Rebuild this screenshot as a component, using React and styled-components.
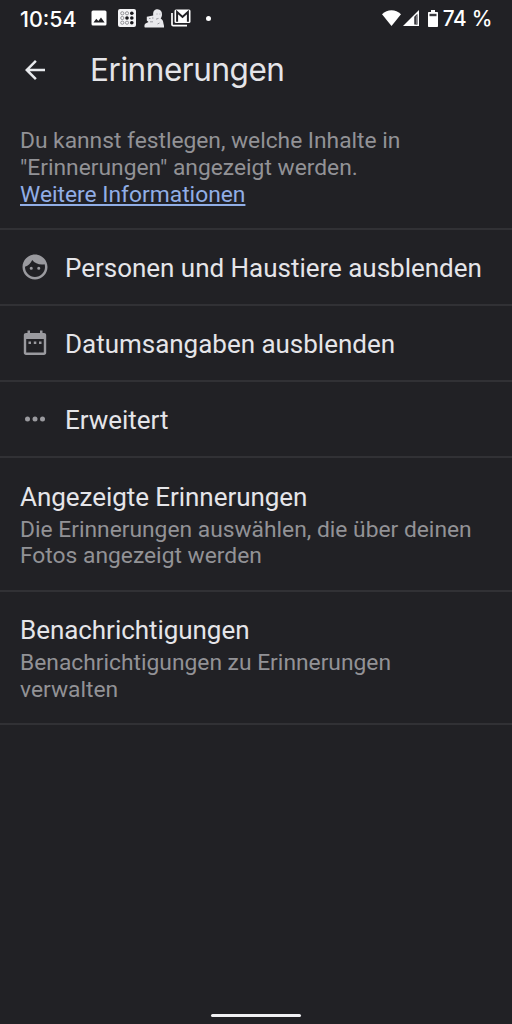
import React from "react";
import styled, { createGlobalStyle } from "styled-components";

export default function App() {
  return (
    <Screen>
      <GlobalStyle />
      <StatusBar>
        <Clock>10:54</Clock>
        <Notifications>
          <PictureIcon />
          <DiceIcon />
          <PersonIcon />
          <GmailIcon />
          <Dot />
        </Notifications>
        <System>
          <WifiIcon />
          <SignalIcon />
          <BatteryIcon />
          <Percent>74 %</Percent>
        </System>
      </StatusBar>
      <AppBar>
        <BackButton aria-label="Zurück">
          <svg width="30" height="30" viewBox="0 0 24 24" fill="#e8eaed">
            <path d="M20 11H7.83l5.59-5.59L12 4l-8 8 8 8 1.41-1.41L7.83 13H20v-2z" />
          </svg>
        </BackButton>
        <Title>Erinnerungen</Title>
      </AppBar>
      <Intro>
        <Line $spacing="-0.02px">Du kannst festlegen, welche Inhalte in</Line>
        <Line>"Erinnerungen" angezeigt werden.</Line>
        <MoreLink href="#">Weitere Informationen</MoreLink>
      </Intro>
      <Row>
        <FaceIcon />
        <RowLabel>Personen und Haustiere ausblenden</RowLabel>
      </Row>
      <Row>
        <CalendarIcon />
        <RowLabel>Datumsangaben ausblenden</RowLabel>
      </Row>
      <Row>
        <MoreIcon />
        <RowLabel>Erweitert</RowLabel>
      </Row>
      <Setting>
        <SettingTitle>Angezeigte Erinnerungen</SettingTitle>
        <Line>Die Erinnerungen auswählen, die über deinen</Line>
        <Line>Fotos angezeigt werden</Line>
      </Setting>
      <Setting>
        <SettingTitle>Benachrichtigungen</SettingTitle>
        <Line>Benachrichtigungen zu Erinnerungen</Line>
        <Line>verwalten</Line>
      </Setting>
      <HomeArea>
        <HomeHandle />
      </HomeArea>
    </Screen>
  );
}

const PictureIcon = () => (
  <svg width="16" height="16" viewBox="0 0 16 16">
    <rect x="0.5" y="0.5" width="15" height="15" rx="1.5" fill="#fff" />
    <path d="M2.5 12.5 5.3 8.8l2 2.3L10 7.6l3.6 4.9z" fill="#202024" />
  </svg>
);

const DiceIcon = () => (
  <svg width="18" height="18" viewBox="0 0 18 18">
    <rect width="18" height="18" rx="2" fill="#f4f4f6" />
    <g fill="none" stroke="#7c7c81" strokeWidth="0.8">
      <circle cx="4.3" cy="4.3" r="1.6" />
      <circle cx="9" cy="4.3" r="1.6" />
      <circle cx="4.3" cy="9" r="1.6" />
      <circle cx="4.3" cy="13.7" r="1.6" />
      <circle cx="9" cy="13.7" r="1.6" />
    </g>
    <g fill="#18181c">
      <circle cx="13.8" cy="4.3" r="1.8" />
      <circle cx="9" cy="9" r="1.8" />
      <circle cx="13.8" cy="9" r="1.8" />
      <circle cx="13.8" cy="13.7" r="1.8" />
    </g>
  </svg>
);

const PersonIcon = () => (
  <svg width="20" height="19" viewBox="0 0 20 19">
    <path
      d="M9.200 6.500C8.800 2 10.500.3 13.500.3S18 2.500 18 5.300c0 1.800-.4 3-1.300 4.200 2 1 2.500 2.800 2.700 4.800l1 4.200H.8C0 17 .4 15.500 1.500 14.600L4.500 13 2.800 11.500V7.800z"
      fill="#e9e9ec"
    />
    <path
      d="M5 9.500h1.500M8 9h1.500M12.500 5h1M15.500 5h.8M12 10.200l2.500-.8M6 12.800h3M13.500 15l2-1"
      fill="none"
      stroke="#85858b"
      strokeWidth="0.8"
    />
  </svg>
);

const GmailIcon = () => (
  <svg width="20" height="18" viewBox="0 0 20 18" fill="none">
    <path d="M1 4v11.500c0 .7.500 1.200 1.200 1.200H16" stroke="#fff" strokeWidth="1.700" />
    <rect x="3.500" y="0.500" width="16" height="13.500" rx="1.500" fill="#fff" />
    <path d="M6.100 12.700V3l5.400 5 5.400-5v9.700" stroke="#202024" strokeWidth="2" />
  </svg>
);

const WifiIcon = () => (
  <svg width="19" height="16" viewBox="0 0 19 16">
    <path d="M9.500 16 0 4.200C2.800 1.600 6 .2 9.500.2S16.200 1.600 19 4.200z" fill="#fff" />
  </svg>
);

const SignalIcon = () => (
  <svg width="16" height="16" viewBox="0 0 16 16">
    <path d="M0 16 16 0v16z" fill="#fff" />
    <path d="M11.300 6.800 14.400 3.700v10.700h-3.100z" fill="#202024" />
    <path d="M12.700 5.500h1.700v9h-1.700z" fill="#77777c" />
  </svg>
);

const BatteryIcon = () => (
  <svg width="10" height="17" viewBox="0 0 10 17">
    <path d="M3 0h4v2h2c.6 0 1 .4 1 1v13c0 .6-.4 1-1 1H1c-.6 0-1-.4-1-1V3c0-.6.4-1 1-1h2z" fill="#fff" />
    <path d="M1.500 3.800h7v2.400h-7z" fill="#3a3a3f" />
  </svg>
);

const FaceIcon = () => (
  <svg width="30" height="30" viewBox="0 0 24 24" fill="#9a9a9f">
    <path d="M10.250 13a1.250 1.250 0 1 1-2.500 0 1.250 1.250 0 0 1 2.500 0zM15 11.750a1.250 1.250 0 1 0 0 2.500 1.250 1.250 0 0 0 0-2.500zM22 12c0 5.520-4.480 10-10 10S2 17.520 2 12 6.480 2 12 2s10 4.480 10 10zm-2 0c0-.78-.12-1.530-.33-2.240-.7.150-1.420.24-2.170.24-3.130 0-5.920-1.440-7.760-3.690C8.690 8.870 6.600 10.880 4 11.860c.01.04 0 .09 0 .14 0 4.410 3.590 8 8 8s8-3.590 8-8z" />
  </svg>
);

const CalendarIcon = () => (
  <svg width="30" height="30" viewBox="0 0 30 30" fill="#9a9a9f">
    <path
      fillRule="evenodd"
      d="M7.500 2.500h2.500V5h10V2.500h2.500V5H24c1.300 0 2.200.9 2.200 2.200v17.600c0 1.300-.9 2.200-2.200 2.200H6c-1.300 0-2.200-.9-2.200-2.200V7.200C3.800 5.900 4.700 5 6 5h1.500zM6.200 11v13.600h17.600V11z"
    />
    <path d="M8.500 13.500H11V16H8.500zM13.800 13.500h2.500V16h-2.500zM19 13.500h2.500V16H19z" />
  </svg>
);

const MoreIcon = () => (
  <svg width="30" height="30" viewBox="0 0 30 30" fill="#9a9a9f">
    <circle cx="7.500" cy="15" r="2.500" />
    <circle cx="15" cy="15" r="2.500" />
    <circle cx="22.500" cy="15" r="2.500" />
  </svg>
);

const GlobalStyle = createGlobalStyle`
  * {
    box-sizing: border-box;
  }
  body {
    margin: 0;
    background-color: #212125;
  }
  svg {
    display: block;
    flex-shrink: 0;
  }
`;

const Screen = styled.div`
  display: flex;
  flex-direction: column;
  height: 100vh;
  overflow: hidden;
  background-color: #212125;
  color: #e5e5e9;
  font-family: Roboto, "Liberation Sans", sans-serif;
`;

const StatusBar = styled.header`
  display: flex;
  align-items: center;
  height: 36px;
  padding: 0 20px;
  color: #fff;
  font-family: Inter, Roboto, sans-serif;
  font-size: 21.500px;
  font-weight: 500;
  white-space: nowrap;
`;

const Clock = styled.span`
  width: 71px;
  padding-top: 1px;
`;

const Notifications = styled.div`
  display: flex;
  align-items: center;
  gap: 8px;
  & > svg:nth-child(2) {
    margin-left: 3px;
  }
  & > svg:nth-child(4) {
    margin-left: -1px;
  }
`;

const Dot = styled.span`
  width: 5px;
  height: 5px;
  margin-left: 7px;
  border-radius: 50%;
  background-color: #fff;
`;

const System = styled.div`
  display: flex;
  align-items: center;
  margin-left: auto;
  gap: 2px;
  & > svg:nth-child(3) {
    margin-left: 7px;
  }
`;

const Percent = styled.span`
  padding-top: 1px;
  margin-left: 3px;
  font-size: 20.800px;
  letter-spacing: -0.3px;
`;

const AppBar = styled.div`
  display: flex;
  align-items: center;
  height: 68px;
  padding: 0 20px;
`;

const BackButton = styled.button`
  padding: 0;
  border: none;
  background: none;
`;

const Title = styled.h1`
  margin: 0 0 0 40px;
  font-family: Inter, Roboto, sans-serif;
  font-size: 31.500px;
  font-weight: 400;
  line-height: 40px;
  letter-spacing: -0.45px;
`;

const Intro = styled.section`
  height: 126px;
  padding: 24px 20px 0;
  border-bottom: 2px solid #313135;
`;

const Line = styled.p`
  margin: 0;
  color: #929296;
  font-size: 22.800px;
  line-height: 26.800px;
  white-space: nowrap;
  letter-spacing: ${(props) => props.$spacing || "0"};
`;

const MoreLink = styled.a`
  display: block;
  color: #91aee6;
  font-size: 22.800px;
  line-height: 26.800px;
  text-underline-offset: 2px;
  text-decoration-thickness: 1.500px;
`;

const Row = styled.div`
  display: flex;
  align-items: center;
  gap: 15px;
  height: 76px;
  padding: 0 20px;
  border-bottom: 2px solid #313135;
`;

const RowLabel = styled.span`
  padding-top: 2px;
  font-size: 26px;
  line-height: 32px;
  white-space: nowrap;
  letter-spacing: -0.02px;
`;

const Setting = styled.section`
  height: 133.500px;
  padding: 22.600px 20px 0;
  border-bottom: 2px solid #313135;
`;

const SettingTitle = styled.h2`
  margin: 0 0 4px;
  font-size: 26px;
  font-weight: 400;
  line-height: 32px;
  letter-spacing: -0.05px;
`;

const HomeArea = styled.footer`
  display: flex;
  justify-content: center;
  margin-top: auto;
  padding-bottom: 7px;
`;

const HomeHandle = styled.div`
  width: 90px;
  height: 3px;
  border-radius: 2px;
  background-color: #f1f1f4;
`;
